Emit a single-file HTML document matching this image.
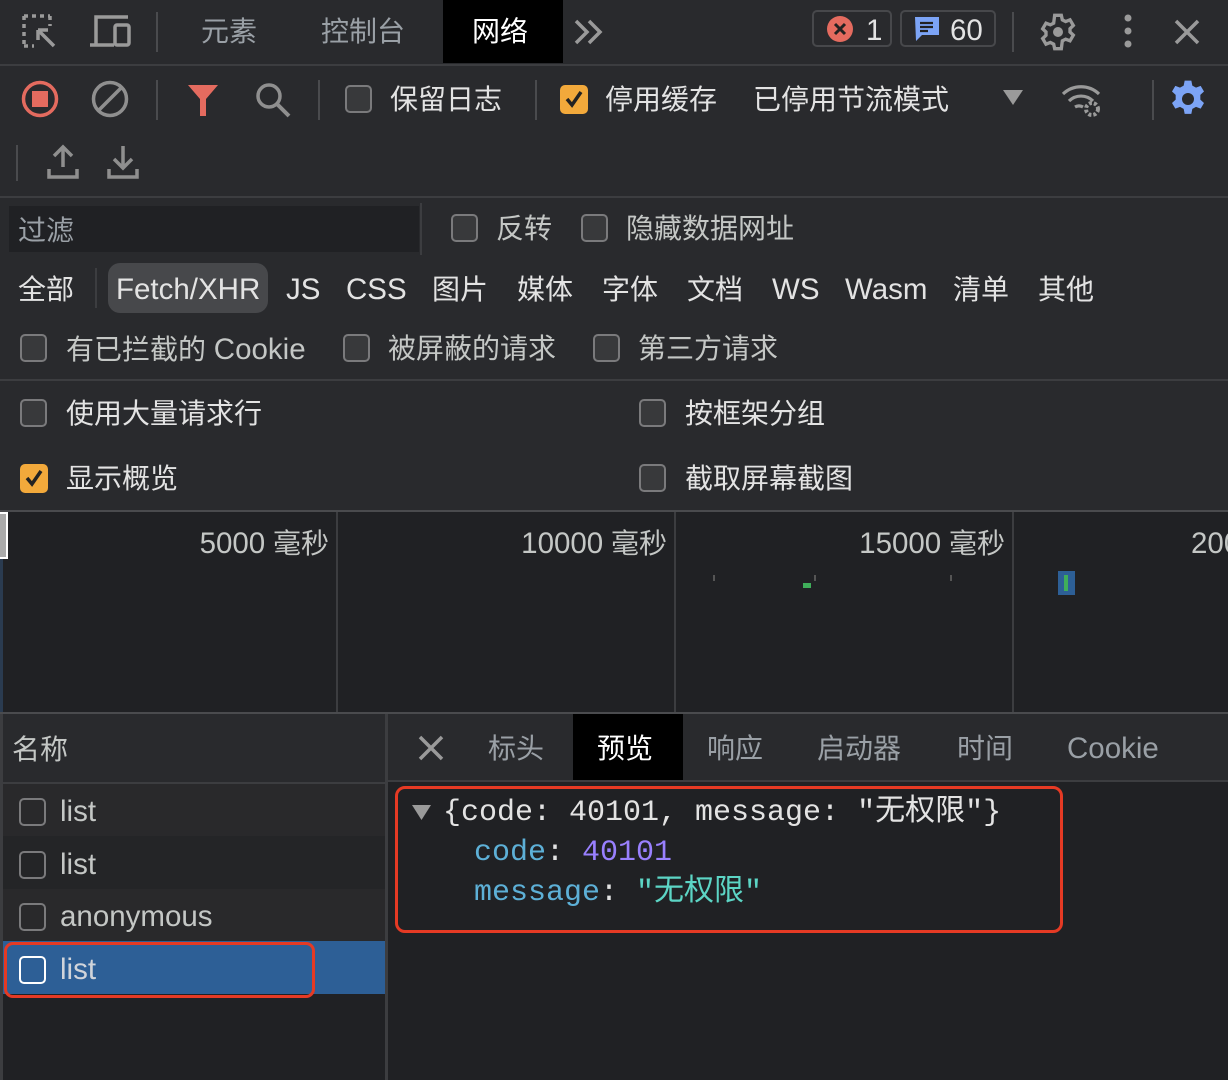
<!DOCTYPE html>
<html><head><meta charset="utf-8"><style>
*{margin:0;padding:0;box-sizing:border-box}
body{width:1228px;height:1080px;overflow:hidden;background:#292a2d;font-family:"Liberation Sans","Noto Sans CJK SC",sans-serif;color:#e3e3e3;position:relative}
.a{position:absolute}
.t{position:absolute;white-space:nowrap;line-height:1;font-size:28px}
.l{font-size:29.5px}
.g{color:#c4c7c5}
.d{color:#9aa0a6}
.hl{position:absolute;left:0;width:1228px;height:2px;background:#3c3d40}
.vs{position:absolute;width:2px;background:#4a4b4e}
.cb{position:absolute;width:27px;height:28px;border:2.5px solid #7a7a7c;border-radius:5px;background:#38393b}
.ck{position:absolute;width:28px;height:29px;border-radius:5px;background:#f2a93b}
.m{font-family:"Liberation Mono","DejaVu Sans Mono","Noto Sans CJK SC",monospace;font-size:30px}
</style></head><body>
<!-- row1 -->
<svg class="a" style="left:20px;top:12px" width="40" height="40" viewBox="0 0 40 40"><g fill="none" stroke="#9a9a9a" stroke-width="3.5"><path d="M4 4h26M4 4v30" stroke-dasharray="4 4"/><path d="M30 4v10M4 34h10" stroke-dasharray="4 4"/><path d="M18 18l16 16M18 18h10M18 18v10"/></g></svg>
<svg class="a" style="left:88px;top:14px" width="44" height="34" viewBox="0 0 44 34"><g fill="none" stroke="#9a9a9a" stroke-width="3.5"><path d="M8 30V3h32"/><path d="M2 31h24"/><rect x="27" y="11" width="14" height="20" rx="2"/></g></svg>
<div class="vs" style="left:156px;top:12px;height:40px"></div>
<div class="t d" style="left:201px;top:18px">元素</div>
<div class="t d" style="left:321px;top:18px">控制台</div>
<div class="a" style="left:443px;top:0;width:120px;height:63px;background:#000"></div>
<div class="t" style="left:472px;top:18px;color:#fff">网络</div>
<svg class="a" style="left:573px;top:18px" width="32" height="28" viewBox="0 0 32 28"><g fill="none" stroke="#9a9a9a" stroke-width="3.5"><path d="M3 3l11 11-11 11M16 3l11 11-11 11"/></g></svg>
<div class="a" style="left:812px;top:10px;width:80px;height:37px;border:2px solid #47484b;border-radius:5px"></div>
<svg class="a" style="left:826px;top:15px" width="28" height="28"><circle cx="14" cy="14" r="13" fill="#e46b5f"/><path d="M9 9l10 10M19 9L9 19" stroke="#222" stroke-width="3"/></svg>
<div class="t l" style="left:866px;top:16px">1</div>
<div class="a" style="left:900px;top:10px;width:96px;height:37px;border:2px solid #47484b;border-radius:5px"></div>
<svg class="a" style="left:914px;top:16px" width="26" height="26"><path d="M1 1h24v18H8l-6 6z" fill="#7ca4f6"/><path d="M6 7h13M6 11h13M6 15h8" stroke="#222" stroke-width="2.2"/></svg>
<div class="t l" style="left:950px;top:16px">60</div>
<div class="vs" style="left:1012px;top:12px;height:40px"></div>
<svg class="a" style="left:1038px;top:12px" width="40" height="40" viewBox="0 0 24 24"><path fill="none" stroke="#9a9a9a" stroke-width="2" d="M10 2h4l.6 2.7 2 1 2.6-1 2 3.4-2 1.9v2l2 1.9-2 3.4-2.6-1-2 1L14 22h-4l-.6-2.7-2-1-2.6 1-2-3.4 2-1.9v-2l-2-1.9 2-3.4 2.6 1 2-1z"/><circle cx="12" cy="12" r="3" fill="#9a9a9a"/></svg>
<svg class="a" style="left:1120px;top:14px" width="16" height="36"><circle cx="8" cy="4" r="3.5" fill="#9a9a9a"/><circle cx="8" cy="17" r="3.5" fill="#9a9a9a"/><circle cx="8" cy="30" r="3.5" fill="#9a9a9a"/></svg>
<svg class="a" style="left:1174px;top:19px" width="26" height="26"><path d="M2 2l22 22M24 2L2 24" stroke="#9a9a9a" stroke-width="3.5"/></svg>
<div class="hl" style="top:64px"></div>
<!-- row2 -->
<svg class="a" style="left:21px;top:80px" width="38" height="38"><circle cx="19" cy="19" r="16.5" fill="none" stroke="#e46b5f" stroke-width="3.5"/><rect x="11" y="11" width="16" height="16" fill="#e46b5f"/></svg>
<svg class="a" style="left:91px;top:80px" width="38" height="38"><circle cx="19" cy="19" r="16.5" fill="none" stroke="#8f8f8f" stroke-width="3.5"/><path d="M8 30L30 8" stroke="#8f8f8f" stroke-width="3.5"/></svg>
<div class="vs" style="left:156px;top:80px;height:40px"></div>
<svg class="a" style="left:187px;top:84px" width="32" height="32"><path d="M1 1h30L19 15v18h-6V15z" fill="#e46b5f"/></svg>
<svg class="a" style="left:254px;top:81px" width="38" height="40"><circle cx="15" cy="15" r="11" fill="none" stroke="#8f8f8f" stroke-width="3.5"/><path d="M23 23l12 12" stroke="#8f8f8f" stroke-width="4"/></svg>
<div class="vs" style="left:318px;top:80px;height:40px"></div>
<div class="cb" style="left:345px;top:85px"></div>
<div class="t" style="left:390px;top:86px">保留日志</div>
<div class="vs" style="left:535px;top:80px;height:40px"></div>
<div class="ck" style="left:560px;top:85px"></div><svg class="a" style="left:564px;top:89px" width="20" height="20"><path d="M3 10l5 6L17 3" fill="none" stroke="#222" stroke-width="3.5"/></svg>
<div class="t" style="left:605px;top:86px">停用缓存</div>
<div class="t" style="left:753px;top:86px">已停用节流模式</div>
<svg class="a" style="left:1003px;top:90px" width="20" height="16"><path d="M0 0h20L10 15z" fill="#9a9a9a"/></svg>
<svg class="a" style="left:1060px;top:80px" width="44" height="38"><g fill="none" stroke="#9a9a9a" stroke-width="3.2"><path d="M3 14a26 26 0 0 1 36 0M9 21a17 17 0 0 1 24 0M15 27a8 8 0 0 1 8 0"/></g><circle cx="32" cy="29" r="6" fill="none" stroke="#9a9a9a" stroke-width="4" stroke-dasharray="3 2"/></svg>
<div class="vs" style="left:1152px;top:80px;height:40px"></div>
<svg class="a" style="left:1168px;top:79px" width="40" height="40" viewBox="0 0 24 24"><path fill="#7ca4f6" d="M10 1h4l.6 3 2.2 1.2 2.8-1.1 2 3.4-2.2 2v2.9l2.2 2-2 3.4-2.8-1.1-2.2 1.2-.6 3h-4l-.6-3-2.2-1.2-2.8 1.1-2-3.4 2.2-2V9.5l-2.2-2 2-3.4 2.8 1.1L9.4 4z"/><circle cx="12" cy="12" r="3.6" fill="#292a2d"/></svg>
<!-- row3 -->
<div class="vs" style="left:16px;top:145px;height:36px"></div>
<svg class="a" style="left:47px;top:144px" width="32" height="36"><g fill="none" stroke="#8f8f8f" stroke-width="3.5"><path d="M16 3v20M7 12l9-9 9 9M2 25v8h28v-8"/></g></svg>
<svg class="a" style="left:107px;top:144px" width="32" height="36"><g fill="none" stroke="#8f8f8f" stroke-width="3.5"><path d="M16 2v22M7 15l9 9 9-9M2 25v8h28v-8"/></g></svg>
<div class="hl" style="top:196px"></div>
<!-- filter -->
<div class="a" style="left:9px;top:206px;width:410px;height:46px;background:#202124"></div>
<div class="t d" style="left:18px;top:217px">过滤</div>
<div class="vs" style="left:420px;top:203px;height:52px;background:#3c3d40"></div>
<div class="cb" style="left:451px;top:214px"></div><div class="t g" style="left:496px;top:215px">反转</div>
<div class="cb" style="left:581px;top:214px"></div><div class="t g" style="left:626px;top:215px">隐藏数据网址</div>
<div class="t" style="left:18px;top:276px">全部</div>
<div class="vs" style="left:95px;top:268px;height:40px;background:#3c3d40"></div>
<div class="a" style="left:108px;top:263px;width:160px;height:50px;background:#47484b;border-radius:12px"></div>
<div class="t l" style="left:116px;top:275px">Fetch/XHR</div>
<div class="t l" style="left:286px;top:275px">JS</div>
<div class="t l" style="left:346px;top:275px">CSS</div>
<div class="t" style="left:432px;top:276px">图片</div>
<div class="t" style="left:517px;top:276px">媒体</div>
<div class="t" style="left:602px;top:276px">字体</div>
<div class="t" style="left:687px;top:276px">文档</div>
<div class="t l" style="left:772px;top:275px">WS</div>
<div class="t l" style="left:845px;top:275px">Wasm</div>
<div class="t" style="left:953px;top:276px">清单</div>
<div class="t" style="left:1038px;top:276px">其他</div>
<div class="cb" style="left:20px;top:334px"></div><div class="t g" style="left:66px;top:335px">有已拦截的 <span class="l">Cookie</span></div>
<div class="cb" style="left:343px;top:334px"></div><div class="t g" style="left:388px;top:335px">被屏蔽的请求</div>
<div class="cb" style="left:593px;top:334px"></div><div class="t g" style="left:638px;top:335px">第三方请求</div>
<div class="hl" style="top:379px"></div>
<div class="cb" style="left:20px;top:399px"></div><div class="t" style="left:66px;top:400px">使用大量请求行</div>
<div class="cb" style="left:639px;top:399px"></div><div class="t" style="left:685px;top:400px">按框架分组</div>
<div class="ck" style="left:20px;top:464px"></div><svg class="a" style="left:24px;top:468px" width="20" height="20"><path d="M3 10l5 6L17 3" fill="none" stroke="#222" stroke-width="3.5"/></svg>
<div class="t" style="left:66px;top:465px">显示概览</div>
<div class="cb" style="left:639px;top:464px"></div><div class="t" style="left:685px;top:465px">截取屏幕截图</div>
<div class="hl" style="top:510px;background:#4a4b4e"></div>
<!-- timeline -->
<div class="a" style="left:0;top:512px;width:1228px;height:200px;background:#202124"></div>
<div class="a" style="left:0;top:512px;width:3px;height:200px;background:#2a3b50"></div>
<div class="a" style="left:0;top:512px;width:8px;height:47px;background:#aaa;border:2px solid #fff;border-left:none"></div>
<div class="vs" style="left:336px;top:512px;height:200px;background:#3c3d40"></div>
<div class="vs" style="left:674px;top:512px;height:200px;background:#3c3d40"></div>
<div class="vs" style="left:1012px;top:512px;height:200px;background:#3c3d40"></div>
<div class="t g" style="right:899px;top:529px"><span class="l">5000</span> 毫秒</div>
<div class="t g" style="right:561px;top:529px"><span class="l">10000</span> 毫秒</div>
<div class="t g" style="right:223px;top:529px"><span class="l">15000</span> 毫秒</div>
<div class="t g l" style="left:1191px;top:529px">200</div>
<div class="a" style="left:713px;top:575px;width:2px;height:6px;background:#555"></div>
<div class="a" style="left:814px;top:575px;width:2px;height:6px;background:#555"></div>
<div class="a" style="left:950px;top:575px;width:2px;height:6px;background:#555"></div>
<div class="a" style="left:803px;top:583px;width:8px;height:5px;background:#3fae5a"></div>
<div class="a" style="left:1058px;top:571px;width:17px;height:24px;background:#2d5f96"></div>
<div class="a" style="left:1064px;top:575px;width:4px;height:16px;background:#3fae5a"></div>
<!-- bottom -->
<div class="hl" style="top:712px;background:#4a4b4e"></div>
<div class="a" style="left:0;top:714px;width:1228px;height:366px;background:#202124"></div>
<div class="a" style="left:0;top:714px;width:385px;height:68px;background:#292a2d"></div>
<div class="a" style="left:0;top:714px;width:3px;height:366px;background:#3c3d40"></div>
<div class="t g" style="left:12px;top:736px">名称</div>
<div class="a" style="left:0;top:782px;width:385px;height:2px;background:#3c3d40"></div>
<div class="a" style="left:3px;top:784px;width:382px;height:52px;background:#29292b"></div>
<div class="a" style="left:3px;top:836px;width:382px;height:53px;background:#242527"></div>
<div class="a" style="left:3px;top:889px;width:382px;height:52px;background:#29292b"></div>
<div class="a" style="left:3px;top:941px;width:382px;height:53px;background:#2d5f96"></div>
<div class="cb" style="left:19px;top:798px;background:none"></div><div class="t g l" style="left:60px;top:797px">list</div>
<div class="cb" style="left:19px;top:851px;background:none"></div><div class="t g l" style="left:60px;top:850px">list</div>
<div class="cb" style="left:19px;top:903px;background:none"></div><div class="t g l" style="left:60px;top:902px">anonymous</div>
<div class="cb" style="left:19px;top:956px;background:none;border-color:#fff"></div><div class="t l" style="left:60px;top:955px;color:#d0d4da">list</div>
<div class="a" style="left:4px;top:942px;width:311px;height:56px;border:3.5px solid #e53a24;border-radius:9px"></div>
<div class="a" style="left:385px;top:714px;width:3px;height:366px;background:#3c3d40"></div>
<div class="a" style="left:388px;top:714px;width:840px;height:66px;background:#292a2d"></div>
<div class="a" style="left:388px;top:780px;width:840px;height:2px;background:#3c3d40"></div>
<svg class="a" style="left:418px;top:735px" width="26" height="26"><path d="M2 2l22 22M24 2L2 24" stroke="#9a9a9a" stroke-width="3.5"/></svg>
<div class="t d" style="left:488px;top:735px">标头</div>
<div class="a" style="left:573px;top:714px;width:110px;height:66px;background:#000"></div>
<div class="t" style="left:597px;top:735px;color:#fff">预览</div>
<div class="t d" style="left:707px;top:735px">响应</div>
<div class="t d" style="left:817px;top:735px">启动器</div>
<div class="t d" style="left:957px;top:735px">时间</div>
<div class="t d l" style="left:1067px;top:734px">Cookie</div>
<svg class="a" style="left:412px;top:805px" width="20" height="16"><path d="M0 0h19L9.5 15z" fill="#9a9a9a"/></svg>
<div class="t m" style="left:443px;top:798px;color:#e3e3e3">{code: 40101, message: "无权限"}</div>
<div class="t m" style="left:474px;top:838px"><span style="color:#5db0d7">code</span>: <span style="color:#9980ff">40101</span></div>
<div class="t m" style="left:474px;top:878px"><span style="color:#5db0d7">message</span>: <span style="color:#5cd5c5">"无权限"</span></div>
<div class="a" style="left:395px;top:786px;width:668px;height:147px;border:3.5px solid #e53a24;border-radius:10px"></div>
</body></html>
